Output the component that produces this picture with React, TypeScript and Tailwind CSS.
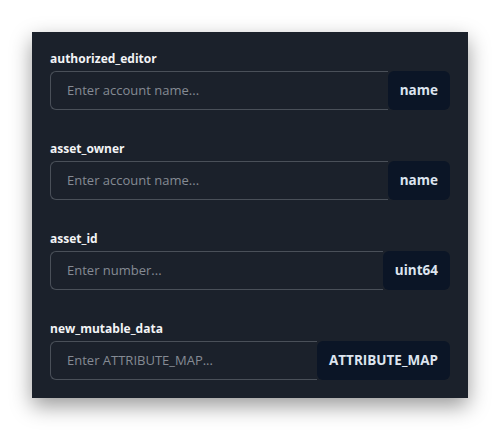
const fields = [
  { label: "authorized_editor", placeholder: "Enter account name...", type: "name" },
  { label: "asset_owner", placeholder: "Enter account name...", type: "name" },
  { label: "asset_id", placeholder: "Enter number...", type: "uint64" },
  { label: "new_mutable_data", placeholder: "Enter ATTRIBUTE_MAP...", type: "ATTRIBUTE_MAP" },
];

export default function App() {
  return (
    <div
      className="min-h-[437px] bg-white p-8"
      style={{ fontFamily: '"Open Sans", "Noto Sans", sans-serif' }}
    >
      <div className="flex w-[436px] flex-col gap-[32px] bg-[#1b212b] px-[18px] pb-[18px] pt-[20px] shadow-[0_8px_20px_rgba(0,0,0,0.4)]">
        {fields.map((f) => (
          <div key={f.label} className="flex flex-col gap-[5px]">
            <label className="text-[12px] font-bold leading-[14px] text-[#f3f4f6]">
              {f.label}
            </label>
            <div className="flex h-[39px]">
              <input
                placeholder={f.placeholder}
                className="min-w-0 flex-1 rounded-l-md border border-r-0 border-[#4a5059] bg-transparent px-4 text-[13px] text-gray-200 outline-none placeholder:text-[#858b94]"
              />
              <span className="flex items-center rounded-md bg-[#0b1526] px-3 text-[13.5px] font-bold text-[#dde4ef]">
                {f.type}
              </span>
            </div>
          </div>
        ))}
      </div>
    </div>
  );
}
